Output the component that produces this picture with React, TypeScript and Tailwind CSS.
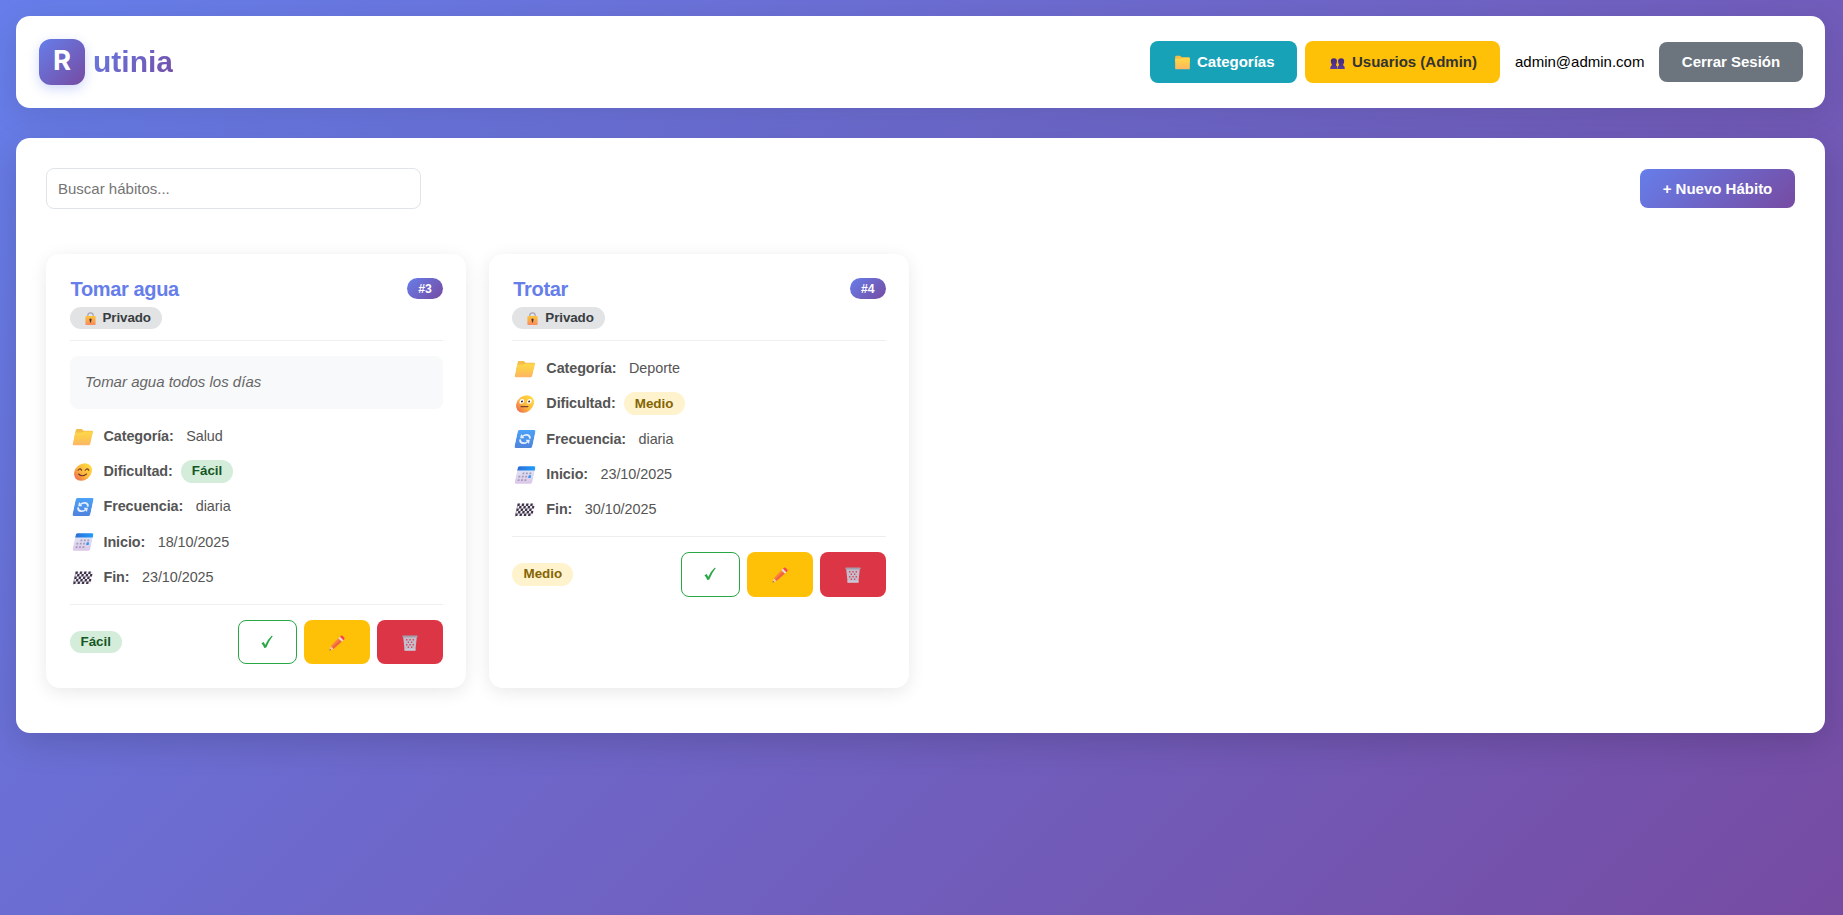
import React from 'react';

type IconProps = { className?: string };

function FolderIcon({ className = '' }: IconProps) {
  return (
    <svg viewBox="0 0 18 18" className={className}>
      <defs>
        <linearGradient id="folder" x1="0" y1="0" x2="0" y2="1">
          <stop offset="0" stopColor="#ffd84a" />
          <stop offset="0.5" stopColor="#fcc94e" />
          <stop offset="1" stopColor="#ffb566" />
        </linearGradient>
      </defs>
      <path d="M0.2 2.2 Q0.2 1 1.4 1 H6.2 L8.2 2.8 H16.4 Q17.8 2.8 17.8 3.8 V9 H0.2 Z" fill="#f3bd48" />
      <path d="M0.2 4.4 H6.4 L8.3 3.4 H16.8 Q17.8 3.4 17.8 4.4 V15.8 Q17.8 17.2 16.6 17.2 H1.4 Q0.2 17.2 0.2 15.8 Z" fill="url(#folder)" />
    </svg>
  );
}

function FaceDefs() {
  return (
    <defs>
      <linearGradient id="face" x1="0.85" y1="0.1" x2="0.15" y2="0.9">
        <stop offset="0" stopColor="#ffdc3f" />
        <stop offset="0.55" stopColor="#fdb73e" />
        <stop offset="1" stopColor="#ee6a4c" />
      </linearGradient>
    </defs>
  );
}

function SmileIcon({ className = '' }: IconProps) {
  return (
    <svg viewBox="0 0 18 18" className={className}>
      <FaceDefs />
      <circle cx="9" cy="9" r="8.8" fill="url(#face)" />
      <g fill="none" stroke="#6b342b" strokeWidth="1.1" strokeLinecap="round">
        <path d="M3.6 7.2 Q5.4 4.6 7.2 7.2" />
        <path d="M10.8 7.2 Q12.6 4.6 14.4 7.2" />
        <path d="M5 11 Q9 14.4 13 11" />
      </g>
    </svg>
  );
}

function NeutralIcon({ className = '' }: IconProps) {
  return (
    <svg viewBox="0 0 18 18" className={className}>
      <FaceDefs />
      <circle cx="9" cy="9" r="8.8" fill="url(#face)" />
      <circle cx="5.2" cy="6.4" r="2.3" fill="#fff" />
      <circle cx="12.8" cy="6.4" r="2.3" fill="#fff" />
      <circle cx="5.4" cy="6.4" r="1" fill="#442434" />
      <circle cx="12.6" cy="6.4" r="1" fill="#442434" />
      <path d="M5.6 11.6 H12.4" stroke="#7a4330" strokeWidth="1.3" strokeLinecap="round" />
    </svg>
  );
}

function SyncIcon({ className = '' }: IconProps) {
  return (
    <svg viewBox="0 0 18 18" className={className}>
      <defs>
        <linearGradient id="sync" x1="0" y1="0" x2="0" y2="1">
          <stop offset="0" stopColor="#4ba2f8" />
          <stop offset="1" stopColor="#4f83dc" />
        </linearGradient>
      </defs>
      <rect x="0.1" y="0.1" width="17.8" height="17.8" rx="1.6" fill="url(#sync)" />
      <g fill="none" stroke="#e6efff" strokeWidth="1.8">
        <path d="M6 6.2 Q7.8 4.6 10 4.8 Q13.4 5.2 13.8 8.6" />
        <path d="M12 11.8 Q10.2 13.4 8 13.2 Q4.6 12.8 4.2 9.4" />
      </g>
      <path d="M4 4 V8.2 H8.2 Z M14 14 V9.8 H9.8 Z" fill="#e6efff" />
    </svg>
  );
}

function CalendarIcon({ className = '' }: IconProps) {
  return (
    <svg viewBox="0 0 18 18" className={className}>
      <defs>
        <linearGradient id="cal" x1="0" y1="0" x2="0" y2="1">
          <stop offset="0" stopColor="#dfe3f4" />
          <stop offset="1" stopColor="#dcc6e8" />
        </linearGradient>
        <linearGradient id="calTop" x1="0" y1="0" x2="1" y2="0">
          <stop offset="0" stopColor="#2c6fd6" />
          <stop offset="1" stopColor="#219dfb" />
        </linearGradient>
      </defs>
      <path d="M0.2 4 H17.8 V16 Q17.8 17.8 16 17.8 H2 Q0.2 17.8 0.2 16 Z" fill="url(#cal)" />
      <path d="M0.2 4.4 V1.8 Q0.2 0.2 1.8 0.2 H16.2 Q17.8 0.2 17.8 1.8 V4.4 Z" fill="url(#calTop)" />
      <g fill="#a29bb8">
        <rect x="6.2" y="6.4" width="1.8" height="1.8" />
        <rect x="9.6" y="6.4" width="1.8" height="1.8" />
        <rect x="13" y="6.4" width="1.8" height="1.8" />
        <rect x="2.8" y="9.8" width="1.8" height="1.8" />
        <rect x="6.2" y="9.8" width="1.8" height="1.8" />
        <rect x="9.6" y="9.8" width="1.8" height="1.8" />
        <rect x="2.8" y="13.2" width="1.8" height="1.8" />
        <rect x="6.2" y="13.2" width="1.8" height="1.8" />
        <rect x="9.6" y="13.2" width="1.8" height="1.8" />
      </g>
      <rect x="12.8" y="9.3" width="2.4" height="2.7" fill="#2f97f2" />
    </svg>
  );
}

const checkerCells = Array.from({ length: 40 }, (_, i) => ({ col: i % 8, row: Math.floor(i / 8) }));

function FinishFlagIcon({ className = '' }: IconProps) {
  return (
    <svg viewBox="0 0 18 18" className={className}>
      <rect x="0.4" y="2.6" width="17.2" height="12.5" fill="#f1edf5" />
      {checkerCells
        .filter(({ col, row }) => (col + row) % 2 === 0)
        .map(({ col, row }) => (
          <rect key={`${col}-${row}`} x={0.4 + col * 2.15} y={2.6 + row * 2.5} width="2.25" height="2.5" fill="#3c3245" />
        ))}
      <rect x="0" y="2.6" width="0.9" height="13" fill="#85768f" />
    </svg>
  );
}

function PeopleIcon({ className = '' }: IconProps) {
  return (
    <svg viewBox="0 0 16 12" className={className}>
      <defs>
        <linearGradient id="people" x1="0" y1="0" x2="0" y2="1">
          <stop offset="0" stopColor="#43297e" />
          <stop offset="1" stopColor="#5c3a9d" />
        </linearGradient>
      </defs>
      <g fill="url(#people)">
        <path d="M0.7 3.4 Q0.7 0.2 4 0.2 Q7.4 0.2 7.4 3.4 Q7.4 6 6.4 7.2 V8 Q8 8.6 8 12 H0 Q0 8.6 1.8 8 V7.2 Q0.7 6 0.7 3.4 Z" />
        <path d="M8.6 3.4 Q8.6 0.2 12 0.2 Q15.3 0.2 15.3 3.4 Q15.3 6 14.2 7.2 V8 Q16 8.6 16 12 H8 Q8 8.6 9.6 8 V7.2 Q8.6 6 8.6 3.4 Z" />
      </g>
    </svg>
  );
}

function LockIcon({ className = '' }: IconProps) {
  return (
    <svg viewBox="0 0 11 13" className={className}>
      <defs>
        <linearGradient id="lock" x1="0" y1="0" x2="0" y2="1">
          <stop offset="0" stopColor="#fdc53a" />
          <stop offset="1" stopColor="#f98a5e" />
        </linearGradient>
      </defs>
      <path d="M2.8 5 V3.4 Q2.8 0.8 5.5 0.8 Q8.2 0.8 8.2 3.4 V5" fill="none" stroke="#a9a3b6" strokeWidth="1.2" />
      <rect x="0.4" y="4" width="10.2" height="9" rx="0.8" fill="url(#lock)" />
      <path d="M5.5 6.4 a1.3 1.3 0 0 1 0.6 2.4 V10.6 H4.9 V8.8 a1.3 1.3 0 0 1 0.6 -2.4 Z" fill="#4a3038" />
    </svg>
  );
}

function CheckIcon({ className = '' }: IconProps) {
  return (
    <svg viewBox="0 0 12 14" className={className}>
      <path d="M0.4 8.2 L2.7 7.1 Q3.6 8.4 4.2 10 Q6.6 4.6 10.6 0.8 L11.8 1 Q7.6 6.2 5.3 12.6 L3.3 12.9 Q2.2 9.8 0.4 8.2 Z" fill="#28a745" />
    </svg>
  );
}

function PencilIcon({ className = '' }: IconProps) {
  return (
    <svg viewBox="0 0 16 16" className={className}>
      <path d="M9.4 3.2 L12.8 6.6 L4.4 14 L1.8 11.2 Z" fill="#fb8040" />
      <path d="M11 4.8 L12.8 6.6 L4.4 14 L3 12.6 Z" fill="#ee6540" />
      <path d="M1.8 11.2 L4.6 14 L0.6 15.4 Z" fill="#f5c6a2" />
      <path d="M1 13.9 L2 15 L0.4 15.6 Z" fill="#4b3444" />
      <path d="M9.4 3.2 L11 1.8 L14.4 5.2 L12.8 6.6 Z" fill="#e4dced" />
      <path d="M11 1.8 L12.2 0.8 Q13 0.2 13.8 0.9 L15.3 2.4 Q16 3.2 15.3 4.2 L14.4 5.2 Z" fill="#f8474f" />
    </svg>
  );
}

function TrashIcon({ className = '' }: IconProps) {
  return (
    <svg viewBox="0 0 16 16" className={className}>
      <path d="M1.2 2 H14.8 L13.4 15.6 H2.6 Z" fill="#c2bccb" />
      <g fill="#d9475b">
        <path d="M4 4 h1.4 v1.6 h-1.4z M7.3 4 h1.4 v1.6 h-1.4z M10.6 4 h1.4 v1.6 h-1.4z" />
        <path d="M5.7 6.5 h1.3 v1.6 h-1.3z M9 6.5 h1.3 v1.6 h-1.3z" />
        <path d="M4 9 h1.4 v1.6 h-1.4z M7.3 9 h1.4 v1.6 h-1.4z M10.6 9 h1.4 v1.6 h-1.4z" />
        <path d="M5.7 11.4 h1.3 v1.6 h-1.3z M9 11.4 h1.3 v1.6 h-1.3z" />
      </g>
      <rect x="0.3" y="0.4" width="15.4" height="2" rx="0.8" fill="#a49dae" />
      <rect x="2.5" y="13.8" width="11" height="1.8" fill="#cdc8d6" />
    </svg>
  );
}

type Level = 'Fácil' | 'Medio';

type Habit = {
  id: number;
  title: string;
  description?: string;
  category: string;
  level: Level;
  frequency: string;
  start: string;
  end: string;
};

const habits: Habit[] = [
  {
    id: 3,
    title: 'Tomar agua',
    description: 'Tomar agua todos los días',
    category: 'Salud',
    level: 'Fácil',
    frequency: 'diaria',
    start: '18/10/2025',
    end: '23/10/2025',
  },
  { id: 4, title: 'Trotar', category: 'Deporte', level: 'Medio', frequency: 'diaria', start: '23/10/2025', end: '30/10/2025' },
];

const levelColors: Record<Level, string> = {
  Fácil: 'bg-[#d4edda] text-[#155724] w-[52.5px]',
  Medio: 'bg-[#fff3cd] text-[#856404] w-[61px]',
};

function LevelPill({ level }: { level: Level }) {
  return (
    <span className={`flex h-[22.4px] items-center justify-center rounded-full text-[13.4px] font-bold ${levelColors[level]}`}>
      {level}
    </span>
  );
}

function Row({ icon: Icon, label, children }: { icon: React.FC<IconProps>; label: string; children: React.ReactNode }) {
  return (
    <div className="flex h-[35.2px] items-center text-[14.4px] text-[#555]">
      <Icon className="ml-1 h-[18px] w-[18px] shrink-0 -skew-x-12" />
      <span className="ml-3 font-bold tracking-[-0.1px]">{label}</span>
      {children}
    </div>
  );
}

function Value({ children }: { children: React.ReactNode }) {
  return <span className="ml-[12.5px] tracking-[-0.05px]">{children}</span>;
}

function HabitCard({ habit }: { habit: Habit }) {
  return (
    <article className="rounded-[14px] bg-white px-[23.5px] pt-[23px] pb-6 shadow-[0_4px_18px_rgba(0,0,0,0.09)]">
      <div className="border-b border-[#eeeeee] pb-[11px]">
        <div className="flex h-[23px] items-center justify-between">
          <h3 className="pt-px pl-px text-[20px] leading-[23px] font-bold tracking-[-0.35px] text-[#667eea]">{habit.title}</h3>
          <span className="flex h-[21px] w-9 items-center justify-center rounded-full bg-linear-135/srgb from-[#667eea] to-[#764ba2] pt-px text-[12.2px] font-bold text-white">
            #{habit.id}
          </span>
        </div>
        <div className="mt-[7px] flex">
          <span className="flex h-[22px] w-[92.5px] items-center rounded-full bg-[#e2e3e5] pl-[15px] text-[13.4px] font-bold text-[#383d41]">
            <LockIcon className="mr-[7px] h-[13px] w-[11px] shrink-0" />
            <span className="tracking-[-0.1px]">Privado</span>
          </span>
        </div>
      </div>
      {habit.description && (
        <p className="mt-[15px] flex h-[52.8px] items-center rounded-lg bg-[#f8f9fa] px-[15.5px] text-[15px] text-[#666] italic">
          {habit.description}
        </p>
      )}
      <div className="pt-[10.4px] pb-[8.9px]">
        <Row icon={FolderIcon} label="Categoría:">
          <Value>{habit.category}</Value>
        </Row>
        <Row icon={habit.level === 'Fácil' ? SmileIcon : NeutralIcon} label="Dificultad:">
          <span className="ml-2 -mt-px">
            <LevelPill level={habit.level} />
          </span>
        </Row>
        <Row icon={SyncIcon} label="Frecuencia:">
          <Value>{habit.frequency}</Value>
        </Row>
        <Row icon={CalendarIcon} label="Inicio:">
          <Value>{habit.start}</Value>
        </Row>
        <Row icon={FinishFlagIcon} label="Fin:">
          <Value>{habit.end}</Value>
        </Row>
      </div>
      <div className="flex items-center justify-between border-t border-[#eeeeee] pt-[15px]">
        <LevelPill level={habit.level} />
        <div className="flex gap-[7px]">
          <button className="flex h-[44.3px] w-[59px] items-center justify-center rounded-lg border border-[#28a745] bg-white">
            <CheckIcon className="h-3.5 w-3" />
          </button>
          <button className="flex h-[44.3px] w-[66px] items-center justify-center rounded-lg bg-[#ffc107]">
            <PencilIcon className="mt-px h-4 w-4" />
          </button>
          <button className="flex h-[44.3px] w-[66px] items-center justify-center rounded-lg bg-[#dc3545]">
            <TrashIcon className="mt-px h-4 w-4" />
          </button>
        </div>
      </div>
    </article>
  );
}

export default function App() {
  return (
    <div className="min-h-screen bg-linear-135/srgb from-[#667eea] to-[#764ba2] pt-4 pr-[18px] pl-4 font-['Liberation_Sans',Arial,sans-serif]">
      <header className="flex h-[92px] items-center justify-between rounded-[14px] bg-white pr-[22px] pl-[23px] shadow-[0_8px_30px_rgba(0,0,0,0.1)]">
        <div className="flex items-center">
          <div className="flex h-[46px] w-[46px] justify-center rounded-xl bg-linear-135/srgb from-[#667eea] to-[#764ba2] font-[Inter,sans-serif] text-[27.5px] leading-[42px] font-bold text-white shadow-[0_4px_12px_rgba(102,126,234,0.3)]">
            R
          </div>
          <span className="ml-2 bg-linear-135/srgb from-[#667eea] to-[#764ba2] bg-clip-text text-[30px] leading-[46px] font-bold text-transparent">
            utinia
          </span>
        </div>
        <nav className="flex items-center text-[15px] font-bold">
          <button className="flex h-[42px] w-[147px] items-center rounded-lg bg-[#17a2b8] pl-[25px] text-white">
            <FolderIcon className="mr-[7px] h-[15px] w-[15px]" />
            <span className="mt-px">Categorías</span>
          </button>
          <button className="ml-2 flex h-[42px] w-[195px] items-center rounded-lg bg-[#ffc107] pl-[25px] text-[#333]">
            <PeopleIcon className="mt-[3px] mr-[7px] h-[11px] w-[15px]" />
            <span className="mt-px">Usuarios (Admin)</span>
          </button>
          <span className="ml-[15px] w-[129px] font-normal whitespace-nowrap text-black">admin@admin.com</span>
          <button className="ml-[15px] h-10 w-36 rounded-lg bg-[#6c757d] text-white">Cerrar Sesión</button>
        </nav>
      </header>

      <main className="mt-[30px] h-[595px] rounded-[14px] bg-white px-[30px] pt-[30px] shadow-[0_10px_34px_rgba(0,0,0,0.15)]">
        <div className="flex items-center justify-between">
          <input
            placeholder="Buscar hábitos..."
            className="h-[41px] w-[375px] rounded-lg border border-[#e1e5e9] px-[11px] text-[15px] placeholder:text-[#757575]"
          />
          <button className="h-[39px] w-[155px] rounded-lg bg-linear-135/srgb from-[#667eea] to-[#764ba2] pt-px text-[15px] font-bold text-white">
            + Nuevo Hábito
          </button>
        </div>
        <section className="mt-[45px] grid h-[434px] grid-cols-4 gap-[22.4px]">
          {habits.map((habit) => (
            <HabitCard key={habit.id} habit={habit} />
          ))}
        </section>
      </main>
    </div>
  );
}
